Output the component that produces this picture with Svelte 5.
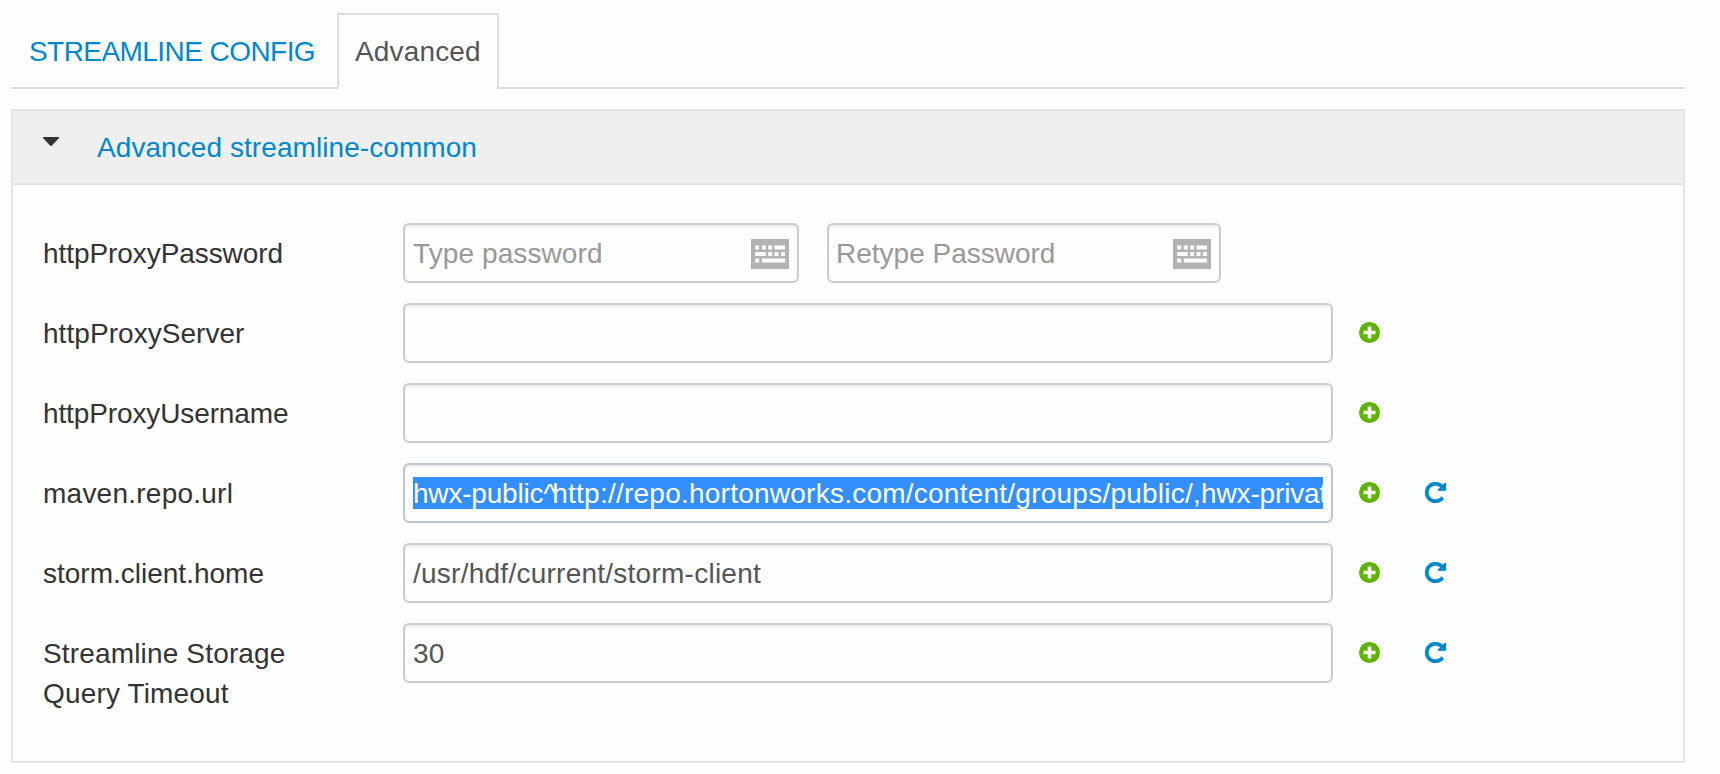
<script>
  const rows = [
    { label: 'httpProxyServer', track: 0.05, parts: [], add: true },
    { label: 'httpProxyUsername', track: -0.12, parts: [], add: true },
    {
      label: 'maven.repo.url',
      track: 0.24,
      parts: [
        ['hwx-public', -0.2],
        ['^', -4.2],
        ['http://repo.hortonworks.com/content/groups/public/,', 0.24],
        ['hwx-privat', -0.15]
      ],
      selected: true,
      add: true,
      reset: true
    },
    { label: 'storm.client.home', track: 0, parts: [['/usr/hdf/current/storm-client', 0.25]], add: true, reset: true },
    { label: 'Streamline Storage Query Timeout', track: 0.16, parts: [['30', 0.3]], add: true, reset: true }
  ];
</script>

{#snippet keyboard()}
  <svg class="keyboard" viewBox="0 0 38 30" width="38" height="30" aria-hidden="true">
    <rect width="38" height="30" rx="0.6" fill="#b2b2b2" />
    <path
      fill="#fff"
      d="M4.200 6.400h4v4h-4zM10.800 6.400h4v4h-4zM17.200 6.400h4v4h-4zM23.500 6.400h10.600v4H23.500zM4.200 13h10.500v4H4.200zM17.200 13h4v4h-4zM23.500 13h4v4h-4zM30 13h4v4h-4zM4.200 19.500h4v4h-4zM10.800 19.500h23.300v4H10.800z"
    />
  </svg>
{/snippet}

<main>
  <nav>
    <a class="tab"><span class="caps">STREAMLINE CONFIG</span></a>
    <a class="tab active">Advanced</a>
  </nav>

  <section>
    <header>
      <svg class="caret" viewBox="0 0 16 9" width="16" height="9" aria-hidden="true">
        <path d="M0 0H16V1L9 8.5Q8 9.4 7 8.5L0 1Z" fill="#333" />
      </svg>
      <h2>Advanced streamline-common</h2>
    </header>

    <div class="body">
      <div class="row">
        <div class="label" style="letter-spacing: -0.07px">httpProxyPassword</div>
        <div class="field half placeholder">
          <span class="text" style="letter-spacing: 0.1px">Type password</span>{@render keyboard()}
        </div>
        <div class="field half second placeholder">
          <span class="text">Retype Password</span>{@render keyboard()}
        </div>
      </div>

      {#each rows as row}
        <div class="row">
          <div class="label" style="letter-spacing: {row.track}px">{row.label}</div>
          <div class="field" class:focus={row.selected}>
            <span class="text" class:selected={row.selected}>{#each row.parts as [part, track]}<span style="letter-spacing: {track}px">{part}</span>{/each}</span>
          </div>
          {#if row.add}
            <svg class="add" viewBox="0 0 21 21" width="21" height="21" aria-hidden="true">
              <circle cx="10.5" cy="10.5" r="10.5" fill="#5ab400" />
              <path d="M8.7 4.5h3.600v4.200h4.200v3.600h-4.200v4.200H8.700v-4.200H4.500V8.700h4.200z" fill="#fff" />
            </svg>
          {/if}
          {#if row.reset}
            <svg class="reset" viewBox="0 128 1536 1536" width="21" height="21" aria-hidden="true">
              <path
                fill="#0088cc"
                stroke="#0088cc"
                stroke-width="30"
                d="M1536 256v448q0 26-19 45t-45 19h-448q-42 0-59-40-17-39 14-69l138-138q-148-137-349-137-104 0-198.500 40.500t-163.500 109.500-109.500 163.500-40.500 198.500 40.500 198.500 109.500 163.500 163.500 109.500 198.500 40.500q119 0 225-52t179-147q7-10 23-12 15 0 25 9l137 138q9 8 9.500 20.500t-7.500 22.500q-109 132-264 204.500t-327 72.500q-156 0-298-61t-245-164-164-245-61-298 61-298 164-245 245-164 298-61q147 0 284.500 55.500t244.500 156.500l130-129q29-31 70-14 39 17 39 59z"
              />
            </svg>
          {/if}
        </div>
      {/each}
    </div>
  </section>
</main>

<style>
  :global(body) {
    background: #fefefe;
  }
  main {
    box-sizing: border-box;
    width: 1720px;
    height: 774px;
    padding: 13px 35px 0 11px;
    background: #fefefe;
    color: #333;
    font: 28px/40px 'Liberation Sans', Arial, sans-serif;
    overflow: hidden;
  }
  nav {
    display: flex;
    height: 74px;
    border-bottom: 2px solid #ddd;
  }
  .tab {
    box-sizing: border-box;
    width: 326px;
    height: 76px;
    padding: 19px 16px 0 18px;
    color: #0088cc;
    white-space: nowrap;
  }
  .caps {
    letter-spacing: -0.56px;
  }
  .tab.active {
    width: 162px;
    padding: 17px 0 0 16px;
    border: 2px solid #ddd;
    border-bottom: 0;
    background: #fefefe;
    color: #555;
    letter-spacing: 0.15px;
  }
  section {
    box-sizing: border-box;
    height: 654px;
    margin-top: 20px;
    border: 2px solid #e4e4e4;
  }
  header {
    display: flex;
    height: 72px;
    padding-left: 30px;
    border-bottom: 2px solid #e4e4e4;
    background: #efefef;
  }
  .caret {
    margin-top: 26px;
  }
  h2 {
    margin: 17px 0 0 38px;
    color: #0088cc;
    font: inherit;
    letter-spacing: 0.07px;
  }
  .body {
    padding: 38px 0 0 30px;
  }
  .row {
    display: flex;
    height: 80px;
  }
  .label {
    width: 290px;
    margin-right: 70px;
    padding-top: 11px;
  }
  .field {
    box-sizing: border-box;
    display: flex;
    align-items: flex-start;
    width: 930px;
    height: 60px;
    padding: 12px 8px 0;
    border: 2px solid #ccc;
    border-radius: 6px;
    background: #fefefe;
    box-shadow: inset 0 2px 2px rgba(0, 0, 0, 0.075);
    color: #555;
  }
  .half {
    width: 396px;
    justify-content: space-between;
  }
  .second {
    width: 394px;
    margin-left: 28px;
    padding-left: 7px;
  }
  .placeholder {
    color: #999;
  }
  .keyboard {
    margin-top: 2px;
  }
  .focus {
    border-color: #b9c8d4;
  }
  .text {
    overflow: hidden;
    height: 32px;
    line-height: 34px;
    white-space: nowrap;
  }
  .selected {
    background: #338fff;
    color: #fff;
  }
  .add {
    margin: 19px 0 0 26px;
  }
  .reset {
    margin: 19px 0 0 45px;
  }
</style>
